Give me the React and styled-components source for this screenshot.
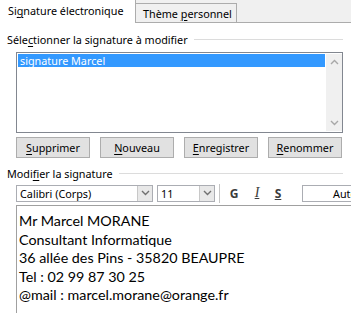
import React from "react";
import styled, { createGlobalStyle } from "styled-components";

const Global = createGlobalStyle`
  html, body { margin: 0; padding: 0; background: #ffffff; }
  body { font-family: "Noto Sans", "Liberation Sans", sans-serif; }
`;

const Page = styled.div`
  width: 351px;
  height: 313px;
  overflow: hidden;
  background: #ffffff;
  font-family: "Noto Sans", "Liberation Sans", sans-serif;
  font-size: 10.8px;
  color: #000;
`;

const TabStrip = styled.div`
  display: flex;
  align-items: flex-end;
  height: 22px;
  background: #f0f0f0;
  border-bottom: 1px solid #acacac;
`;

const Tab = styled.div`
  box-sizing: border-box;
  display: flex;
  align-items: center;
  width: ${(p) => p.$w}px;
  height: ${(p) => (p.$active ? 23 : 19)}px;
  margin-bottom: ${(p) => (p.$active ? -1 : 0)}px;
  padding-left: ${(p) => (p.$active ? 8 : 7)}px;
  padding-bottom: ${(p) => (p.$active ? 2 : 0)}px;
  background: ${(p) => (p.$active ? "#ffffff" : "#f0f0f0")};
  border-right: 1px solid #acacac;
  border-top: ${(p) => (p.$active ? "none" : "1px solid #acacac")};
  white-space: nowrap;
`;

const U = styled.span`
  text-decoration: underline;
  text-underline-offset: 2px;
`;

const Body = styled.div`
  display: flex;
  flex-direction: column;
  padding: 9px 8px 0 7px;
`;

const GroupHeader = styled.div`
  display: flex;
  align-items: center;
  gap: 6px;
  height: 14px;
  white-space: nowrap;
  &::after {
    content: "";
    flex: 1;
    border-top: 1px solid #dcdcdc;
    margin-top: 1px;
  }
`;

const Indented = styled.div`
  margin-left: 9px;
`;

const ListBox = styled.div`
  box-sizing: border-box;
  margin-top: 6px;
  height: 81px;
  display: flex;
  border: 1px solid #828790;
  padding: 1px 0 1px 1px;
  background: #fff;
`;

const ListItems = styled.div`
  flex: 1;
  display: flex;
  flex-direction: column;
`;

const ListItem = styled.div`
  height: 13px;
  line-height: 13px;
  padding-left: 2px;
  background: ${(p) => (p.$selected ? "#3399ff" : "transparent")};
  color: ${(p) => (p.$selected ? "#ffffff" : "#000")};
  margin-right: 1px;
`;

const ScrollBar = styled.div`
  width: 16px;
  background: #f0f0f0;
  display: flex;
  flex-direction: column;
  justify-content: space-between;
  align-items: center;
  padding: 5px 0 5px;
`;

const ButtonRow = styled.div`
  display: flex;
  gap: 10px;
  margin-top: 4px;
`;

const Button = styled.div`
  box-sizing: border-box;
  width: 74px;
  height: 21px;
  display: flex;
  align-items: center;
  justify-content: center;
  background: #e1e1e1;
  border: 1px solid #adadad;
`;

const SecondHeader = styled(GroupHeader)`
  margin-top: 8px;
`;

const Toolbar = styled.div`
  display: flex;
  align-items: center;
  margin-top: 4px;
  height: 18px;
  & > * { flex-shrink: 0; }
`;

const Combo = styled.div`
  box-sizing: border-box;
  width: ${(p) => p.$w}px;
  height: 17px;
  margin-right: ${(p) => p.$mr || 0}px;
  display: flex;
  border: 1px solid #abadb3;
  background: #fff;
`;

const ComboText = styled.div`
  flex: 1;
  padding-left: 3px;
  line-height: 15px;
  white-space: nowrap;
  overflow: hidden;
`;

const ComboArrow = styled.div`
  width: 14px;
  background: #e8e8e8;
  border-left: 1px solid #c8c8c8;
  display: flex;
  align-items: center;
  justify-content: center;
`;

const Separator = styled.div`
  width: 1px;
  height: 19px;
  background: #c5c5c5;
  margin-left: 4px;
`;

const FormatBtn = styled.div`
  width: ${(p) => p.$w}px;
  text-align: center;
  font-weight: ${(p) => (p.$bold ? 700 : 400)};
  font-style: ${(p) => (p.$italic ? "italic" : "normal")};
  font-family: ${(p) => (p.$serif ? '"Liberation Serif", serif' : "inherit")};
  font-size: ${(p) => (p.$serif ? 14 : 12)}px;
  color: #3c3c3c;
  text-decoration: ${(p) => (p.$under ? "underline" : "none")};
`;

const ColorBox = styled.div`
  box-sizing: border-box;
  width: 90px;
  height: 17px;
  margin-left: 12px;
  border: 1px solid #abadb3;
  background: #fff;
  padding-left: 30px;
  line-height: 15px;
  white-space: nowrap;
`;

const Editor = styled.div`
  box-sizing: border-box;
  margin-top: 3px;
  margin-right: -8px;
  margin-left: 9px;
  height: 120px;
  border-top: 1px solid #a0a0a0;
  border-left: 1px solid #a0a0a0;
  padding: 6px 0 0 2px;
  font-family: "Lato", "Open Sans", sans-serif;
  font-size: 14.3px;
  line-height: 18.6px;
  color: #000;
`;

const Chevron = ({ up, color = "#a8a8a8" }) => (
  <svg width="9" height="6" viewBox="0 0 9 6">
    <polyline
      points={up ? "1,5 4.5,1.5 8,5" : "1,1 4.5,4.5 8,1"}
      fill="none"
      stroke={color}
      strokeWidth="1.4"
    />
  </svg>
);

const buttons = [
  ["S", "upprimer"],
  ["N", "ouveau"],
  ["E", "nregistrer"],
  ["R", "enommer"],
];

const lines = [
  "Mr Marcel MORANE",
  "Consultant Informatique",
  "36 allée des Pins - 35820 BEAUPRE",
  "Tel : 02 99 87 30 25",
  "@mail : marcel.morane@orange.fr",
];

export default function App() {
  return (
    <Page>
      <Global />
      <TabStrip>
        <Tab $active $w={136}>
          <span>
            Si<U>g</U>nature électronique
          </span>
        </Tab>
        <Tab $w={101}>
          <span>
            Thème <U>p</U>ersonnel
          </span>
        </Tab>
      </TabStrip>
      <Body>
        <GroupHeader>
          <span>
            Séle<U>c</U>tionner la signature à modifier
          </span>
        </GroupHeader>
        <Indented>
          <ListBox>
            <ListItems>
              <ListItem $selected>signature Marcel</ListItem>
            </ListItems>
            <ScrollBar>
              <Chevron up />
              <Chevron />
            </ScrollBar>
          </ListBox>
          <ButtonRow>
            {buttons.map(([k, rest]) => (
              <Button key={k}>
                <span>
                  <U>{k}</U>
                  {rest}
                </span>
              </Button>
            ))}
          </ButtonRow>
        </Indented>
        <SecondHeader>
          <span>
            Modi<U>f</U>ier la signature
          </span>
        </SecondHeader>
        <Indented>
          <Toolbar>
            <Combo $w={137} $mr={4}>
              <ComboText>Calibri (Corps)</ComboText>
              <ComboArrow>
                <Chevron color="#707070" />
              </ComboArrow>
            </Combo>
            <Combo $w={58}>
              <ComboText>11</ComboText>
              <ComboArrow>
                <Chevron color="#707070" />
              </ComboArrow>
            </Combo>
            <Separator />
            <FormatBtn $w={28} $bold>G</FormatBtn>
            <FormatBtn $w={18} $italic $serif $under>I</FormatBtn>
            <FormatBtn $w={24} $bold $under>S</FormatBtn>
            <ColorBox>Automatique</ColorBox>
          </Toolbar>
        </Indented>
        <Editor>
          {lines.map((l) => (
            <div key={l}>{l}</div>
          ))}
        </Editor>
      </Body>
    </Page>
  );
}
